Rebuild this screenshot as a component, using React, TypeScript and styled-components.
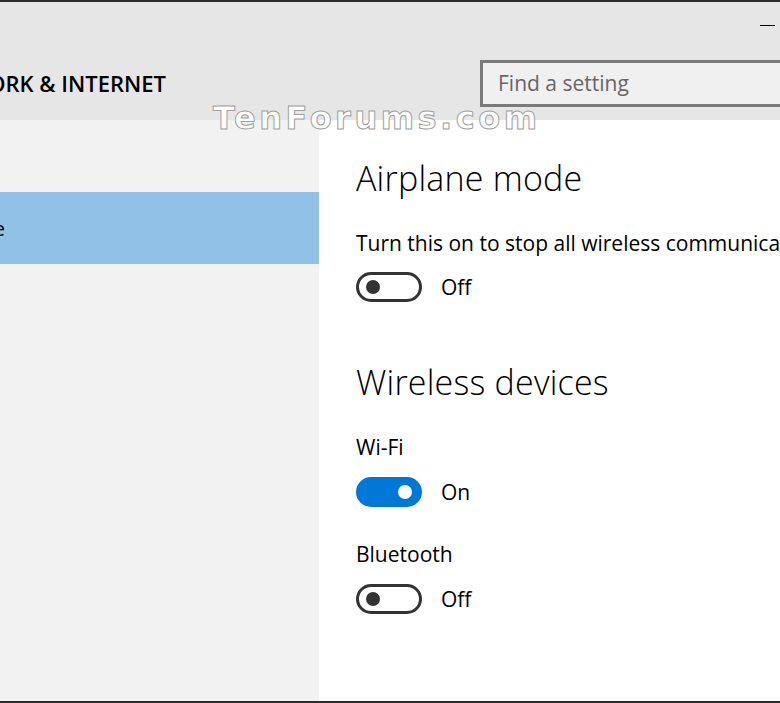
import React from "react";
import styled, { createGlobalStyle } from "styled-components";

const GlobalStyle = createGlobalStyle`
  html, body {
    margin: 0;
    padding: 0;
    background: #e6e6e6;
  }
  body {
    font-family: "Open Sans", "Noto Sans", sans-serif;
    color: #000;
  }
`;

type ToggleProps = { on?: boolean };

const App = () => {
  return (
    <Window>
      <GlobalStyle />
      <Header>
        <TitleBar>
          <MinButton />
        </TitleBar>
        <HeaderRow>
          <PageTitle>
            <span>NETWORK &amp; INTERNET</span>
          </PageTitle>
          <SearchBox>Find a setting</SearchBox>
        </HeaderRow>
      </Header>
      <Body>
        <Sidebar>
          <NavItem selected>
            <NavLabel>
              <span>Airplane mode</span>
            </NavLabel>
          </NavItem>
        </Sidebar>
        <Content>
          <SectionTitle>Airplane mode</SectionTitle>
          <Description>Turn this on to stop all wireless communication, like Wi-Fi, cellular, and Bluetooth.</Description>
          <ToggleRow>
            <Toggle on={false} />
            <ToggleText>Off</ToggleText>
          </ToggleRow>

          <SectionTitle spaced>Wireless devices</SectionTitle>
          <SettingName>Wi-Fi</SettingName>
          <ToggleRow>
            <Toggle on />
            <ToggleText>On</ToggleText>
          </ToggleRow>
          <SettingName>Bluetooth</SettingName>
          <ToggleRow>
            <Toggle on={false} />
            <ToggleText>Off</ToggleText>
          </ToggleRow>
        </Content>
      </Body>
      <Watermark>TenForums.com</Watermark>
    </Window>
  );
};

export default App;

const Window = styled.div`
  position: relative;
  width: 780px;
  height: 703px;
  overflow: hidden;
  display: flex;
  flex-direction: column;
  border-top: 2px solid #2b2b2b;
  border-bottom: 2px solid #2b2b2b;
  box-sizing: border-box;
`;

const Header = styled.div`
  height: 118px;
  background: #e6e6e6;
  display: flex;
  flex-direction: column;
`;

const TitleBar = styled.div`
  height: 58px;
  display: flex;
  justify-content: flex-end;
  align-items: flex-start;
  padding-right: 5px;
`;

const MinButton = styled.div`
  width: 15px;
  height: 1px;
  margin-top: 23px;
  background: #000;
`;

const HeaderRow = styled.div`
  display: flex;
  align-items: flex-start;
  justify-content: space-between;
`;

// the window is cropped, so the heading runs off the left edge
const PageTitle = styled.div`
  width: 166px;
  display: flex;
  justify-content: flex-end;
  overflow: hidden;
  font-size: 22px;
  font-weight: 600;
  line-height: 46px;
  white-space: nowrap;

  > span {
    flex-shrink: 0;
  }
`;

const SearchBox = styled.div`
  width: 320px;
  height: 47px;
  margin-right: -20px;
  box-sizing: border-box;
  border: 3px solid #7a7a7a;
  background: #f0f0f0;
  color: #666;
  font-size: 21px;
  line-height: 41px;
  padding-left: 15px;
`;

const Body = styled.div`
  flex: 1;
  display: flex;
  background: #fff;
`;

const Sidebar = styled.div`
  width: 319px;
  background: #f2f2f2;
  padding-top: 72px;
`;

const NavItem = styled.div<{ selected?: boolean }>`
  height: 72px;
  display: flex;
  align-items: center;
  background: ${(p) => (p.selected ? "#91c1e7" : "transparent")};
`;

const NavLabel = styled.div`
  width: 5px;
  display: flex;
  justify-content: flex-end;
  overflow: hidden;
  font-size: 20px;
  white-space: nowrap;

  > span {
    flex-shrink: 0;
  }
`;

const Content = styled.div`
  flex: 1;
  padding: 36px 0 0 37px;
  white-space: nowrap;
  overflow: hidden;
`;

const SectionTitle = styled.div<{ spaced?: boolean }>`
  font-size: 34px;
  font-weight: 300;
  letter-spacing: 0.2px;
  line-height: 44px;
  margin-top: ${(p) => (p.spaced ? "58px" : "0")};
  margin-bottom: 29px;
`;

const Description = styled.div`
  font-size: 21px;
  line-height: 28px;
  margin-bottom: 15px;
`;

const SettingName = styled.div`
  font-size: 21px;
  line-height: 28px;
  margin-bottom: 16px;
`;

const ToggleRow = styled.div`
  display: flex;
  align-items: center;
  gap: 19px;
  height: 30px;
  margin-bottom: 33px;
`;

const Toggle = styled.div<ToggleProps>`
  position: relative;
  width: 66px;
  height: 30px;
  box-sizing: border-box;
  border-radius: 15px;
  border: 3px solid ${(p) => (p.on ? "#0078d7" : "#333")};
  background: ${(p) => (p.on ? "#0078d7" : "#fff")};

  &::after {
    content: "";
    position: absolute;
    top: 5px;
    left: ${(p) => (p.on ? "39px" : "7px")};
    width: 14px;
    height: 14px;
    border-radius: 50%;
    background: ${(p) => (p.on ? "#fff" : "#333")};
  }
`;

const ToggleText = styled.span`
  font-size: 21px;
  line-height: 30px;
`;

const Watermark = styled.div`
  position: absolute;
  left: 213px;
  top: 97px;
  font-family: "DejaVu Sans", sans-serif;
  font-weight: bold;
  font-size: 32px;
  letter-spacing: 3.5px;
  color: #fff;
  -webkit-text-stroke: 1px #a0a0a0;
  pointer-events: none;
`;
